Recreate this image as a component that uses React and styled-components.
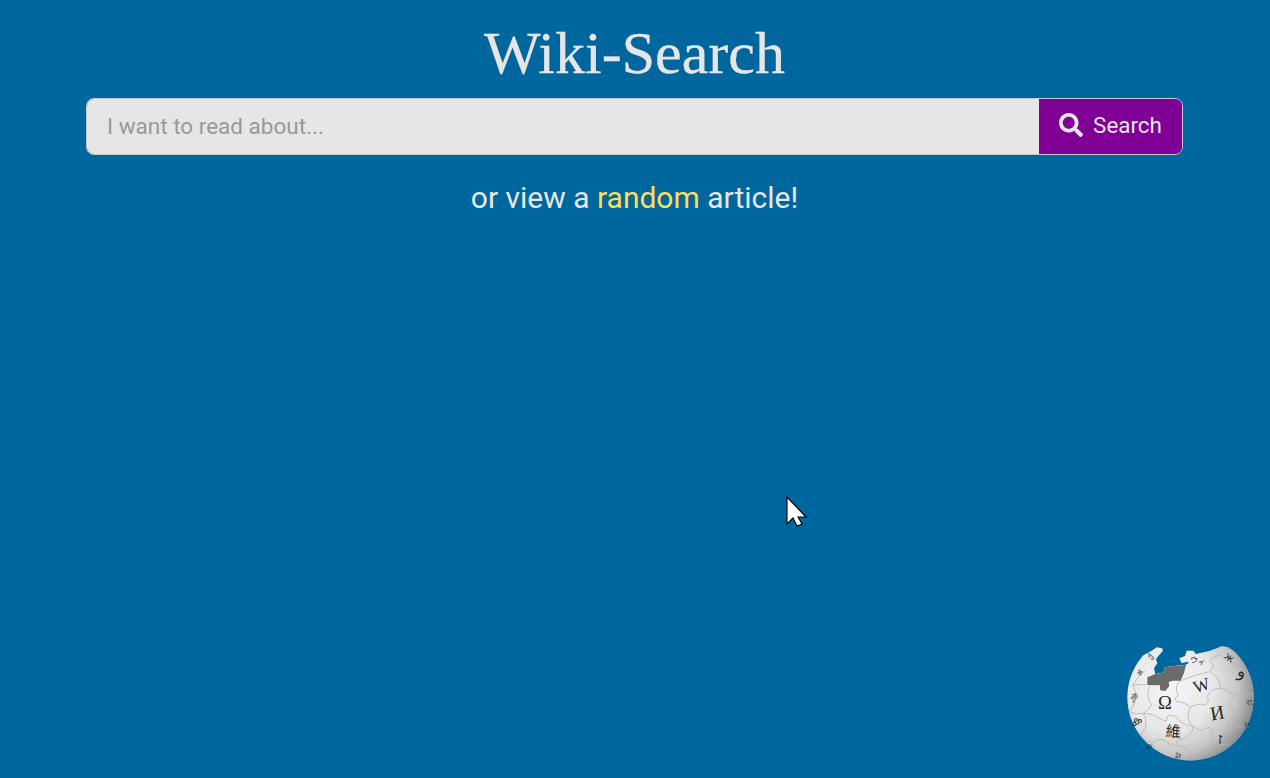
import React from 'react'
import styled, { createGlobalStyle } from 'styled-components'
import { FaSearch } from 'react-icons/fa'

const GlobalStyle = createGlobalStyle`
    html, body {
        margin: 0;
        height: 100%;
        overflow: hidden;
        background-color: #00669e;
    }
`
const Page = styled.div`
    position: relative;
    height: 778px;
    padding: 0 87px 0 86px;
    font-family: Roboto, sans-serif;
    text-align: center;
`
const Title = styled.h1`
    margin: 0;
    padding-top: 19px;
    height: 98px;
    box-sizing: border-box;
    font-family: 'Liberation Serif', serif;
    font-weight: 400;
    font-size: 60px;
    line-height: 68px;
    color: #e6e6e6;
    -webkit-text-stroke: 0.3px #e6e6e6;
`
const SearchBar = styled.form`
    display: flex;
    height: 57px;
    box-sizing: border-box;
    border: 1px solid #c8c8c8;
    border-radius: 8px;
    overflow: hidden;
`
const SearchInput = styled.input`
    flex: 1;
    min-width: 0;
    border: 0;
    outline: 0;
    padding: 0 20px 2px;
    background: #e6e6e6;
    font-family: Roboto, sans-serif;
    font-size: 22.5px;
    color: #333;
    &::placeholder {
        color: #999;
        opacity: 1;
    }
`
const SearchButton = styled.button`
    width: 143px;
    display: flex;
    align-items: center;
    justify-content: center;
    gap: 10px;
    border: 0;
    padding: 0 0 4px;
    background: #800096;
    color: #e6e6e6;
    font-family: Roboto, sans-serif;
    font-size: 22.4px;
`
const Subtitle = styled.p`
    margin: 26px 0 0;
    font-size: 30px;
    line-height: 34px;
    color: #e6e6e6;
`
const RandomLink = styled.a`
    color: #ffdd55;
`
const Cursor = styled.svg`
    position: absolute;
    left: 786px;
    top: 496px;
`
const Globe = styled.svg`
    position: absolute;
    right: 0;
    bottom: 0;
`

const sphereClip = 'M0 444 L0 95 L95 78 L125 62 L140 52 L157 55 L158 64 L145 78 L138 88 L142 100 L132 115 L136 132 L160 128 L165 112 L190 108 L225 105 L236 100 L232 95 L215 100 L208 85 L225 78 L230 62 L250 62 L258 72 L300 62 L322 54 L335 48 L355 52 L372 62 L480 60 L480 444 Z'

const pieces = [
    'M68 165 Q110 162 113 164',
    'M212 152 Q190 170 205 195 Q190 205 200 215 Q225 215 240 232 Q225 270 250 290',
    'M212 152 Q250 135 300 125 Q318 110 300 92 Q310 78 328 75',
    'M300 125 Q335 150 330 175 Q305 175 292 198 Q300 215 285 225 Q265 218 240 232',
    'M330 175 Q355 178 375 200 Q385 185 400 190 Q415 195 430 190',
    'M375 200 Q350 218 362 232 Q380 250 370 262 Q350 265 352 282 Q365 295 360 302',
    'M360 302 Q385 285 416 290',
    'M250 290 Q270 305 278 300 Q300 285 305 300 Q310 325 305 342 Q285 350 290 370 Q270 380 255 385',
    'M120 165 Q105 200 125 225 Q115 240 100 250 Q125 250 140 260 Q170 280 172 268 Q165 250 195 258 Q215 285 250 290',
    'M58 245 Q80 255 100 250 Q118 280 98 305 Q82 325 125 338 Q155 320 170 335 Q195 355 205 345',
    'M205 345 Q190 330 215 328 Q245 320 250 290',
    'M205 345 Q235 350 255 385 M125 338 Q135 360 165 372',
    'M305 342 Q340 345 362 342 M330 75 Q350 88 372 100 Q372 120 392 112',
    'M105 120 Q90 135 68 165 Q90 205 58 245',
]

const glyphs = [
    { t: 'Ω', x: 165, y: 236, s: 56, r: 0, f: 'Liberation Serif' },
    { t: 'W', x: 280, y: 183, s: 52, r: -18, f: 'Liberation Serif' },
    { t: 'И', x: 325, y: 268, s: 58, r: -10, f: 'Liberation Serif' },
    { t: '維', x: 189, y: 321, s: 46, r: 4, f: 'Noto Sans CJK TC' },
    { t: 'ウィ', x: 262, y: 101, s: 24, r: 12, f: 'Noto Sans CJK JP' },
    { t: 'ז', x: 330, y: 342, s: 46, r: 4, f: 'Liberation Serif', w: 700 },
    { t: 'و', x: 392, y: 140, s: 50, r: 10, f: 'DejaVu Sans' },
    { t: 'ಭ', x: 414, y: 218, s: 26, r: 80, f: 'Noto Sans' },
    { t: 'ע', x: 408, y: 290, s: 24, r: 20, f: 'DejaVu Sans' },
    { t: 'Ж', x: 352, y: 92, s: 26, r: 35, f: 'DejaVu Sans' },
    { t: 'ஆ', x: 74, y: 205, s: 24, r: -80, f: 'Noto Sans' },
    { t: 'ക', x: 84, y: 284, s: 34, r: -30, f: 'Noto Sans' },
    { t: 'अ', x: 96, y: 132, s: 22, r: -60, f: 'Noto Sans' },
    { t: 'ქ', x: 126, y: 84, s: 24, r: -50, f: 'DejaVu Sans' },
    { t: 'ಅ', x: 212, y: 376, s: 30, r: -80, f: 'Noto Sans' },
    { t: 'ო', x: 122, y: 356, s: 24, r: -40, f: 'DejaVu Sans' },
]

const WikiGlobe = () => (
    <Globe width="160" height="148" viewBox="0 0 480 444">
        <defs>
            <radialGradient id="ball" gradientUnits="userSpaceOnUse" cx="180" cy="170" r="260">
                <stop offset="0" stopColor="#f6f6f6" />
                <stop offset="0.5" stopColor="#e8e8e8" />
                <stop offset="0.78" stopColor="#c6c6c6" />
                <stop offset="1" stopColor="#8a8a8a" />
            </radialGradient>
            <clipPath id="ballCut">
                <path d={sphereClip} />
            </clipPath>
        </defs>
        <g clipPath="url(#ballCut)">
            <circle cx="242" cy="202" r="190" fill="url(#ball)" />
            <path d="M112 142 L136 132 L160 128 L165 112 L190 108 L228 105 L222 128 L212 152 L188 152 L176 156 L178 168 L166 183 L150 181 L150 166 L112 165 Z" fill="#6b6b6b" />
            {pieces.map((d) => (
                <path key={d} d={d} fill="none" stroke="#b4b4b4" strokeWidth="2.5" />
            ))}
            {glyphs.map((g) => (
                <text
                    key={g.t}
                    x={g.x}
                    y={g.y}
                    fontSize={g.s}
                    fontWeight={g.w || 400}
                    fontFamily={`'${g.f}', serif`}
                    fill="#2a2a2a"
                    textAnchor="middle"
                    transform={`rotate(${g.r} ${g.x} ${g.y})`}
                >
                    {g.t}
                </text>
            ))}
        </g>
    </Globe>
)

const App = () => {
    return (
        <Page>
            <GlobalStyle />
            <Title>Wiki-Search</Title>
            <SearchBar>
                <SearchInput placeholder="I want to read about..." />
                <SearchButton type="button">
                    <FaSearch size={24} />
                    Search
                </SearchButton>
            </SearchBar>
            <Subtitle>
                or view a <RandomLink>random</RandomLink> article!
            </Subtitle>
            <Cursor width="22" height="32" viewBox="0 0 22 32">
                <path d="M1 1 L1 28 L7 22 L11 30 L16 28 L12 21 L20 21 Z" fill="#fff" stroke="#000" strokeWidth="1.1" />
            </Cursor>
            <WikiGlobe />
        </Page>
    )
}

export default App
